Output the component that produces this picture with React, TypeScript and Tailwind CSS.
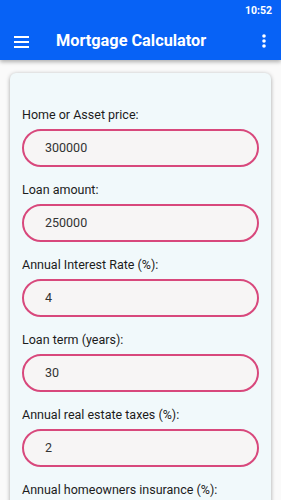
import React from "react";

const fields = [
  { label: "Home or Asset price:", value: "300000" },
  { label: "Loan amount:", value: "250000" },
  { label: "Annual Interest Rate (%):", value: "4" },
  { label: "Loan term (years):", value: "30" },
  { label: "Annual real estate taxes (%):", value: "2" },
  { label: "Annual homeowners insurance (%):", value: "0.5" },
];

export default function App() {
  return (
    <div
      className="w-[281px] h-[500px] overflow-hidden bg-[#fafafa] flex flex-col"
      style={{ fontFamily: "Roboto, 'Noto Sans', sans-serif" }}
    >
      <div className="bg-[#0762f6] shrink-0 shadow-[0_2px_4px_rgba(0,0,0,0.3)] z-10">
        <div className="h-[22px] flex items-center justify-end pr-[9px]">
          <span className="text-white text-[10.5px] font-bold">10:52</span>
        </div>
        <div className="h-[38px] flex items-center">
          <div className="w-[56px] pl-[14px] flex items-center">
            <svg width="15" height="13" viewBox="0 0 15 13">
              <rect x="0" y="1" width="15" height="2" fill="white" />
              <rect x="0" y="6" width="15" height="2" fill="white" />
              <rect x="0" y="11" width="15" height="2" fill="white" />
            </svg>
          </div>
          <span className="text-white text-[16.3px] font-bold flex-1">Mortgage Calculator</span>
          <div className="pr-[15px]">
            <svg width="4" height="14" viewBox="0 0 4 14">
              <circle cx="2" cy="2" r="1.8" fill="white" />
              <circle cx="2" cy="7" r="1.8" fill="white" />
              <circle cx="2" cy="12" r="1.8" fill="white" />
            </svg>
          </div>
        </div>
      </div>
      <div className="px-[10px] pt-[13px]">
        <div className="bg-[#f1f9fb] rounded-[6px] shadow-[0_1px_4px_rgba(0,0,0,0.35)] px-[12px] pt-[35px] pb-4 flex flex-col gap-[16px]">
          {fields.map((f) => (
            <div key={f.label} className="flex flex-col gap-[7px]">
              <div className="text-[12.5px] text-[#1c1c1c] leading-[14px] h-[14px]">{f.label}</div>
              <div className="h-[38px] w-[237px] rounded-full border-2 border-[#d8487c] bg-[#f7f5f5] flex items-center pl-[21px]">
                <span className="text-[12.5px] text-[#333]">{f.value}</span>
              </div>
            </div>
          ))}
        </div>
      </div>
    </div>
  );
}
